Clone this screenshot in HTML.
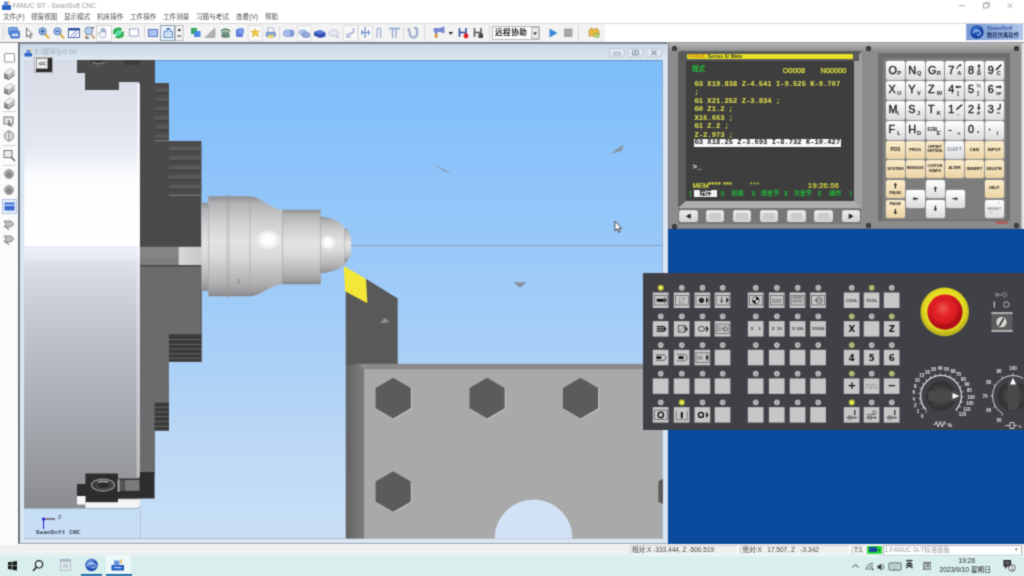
<!DOCTYPE html><html lang="zh"><head><meta charset="utf-8"><title>FANUC 0iT - SwanSoft CNC</title><style>
*{margin:0;padding:0;box-sizing:border-box}
html,body{width:1024px;height:576px;overflow:hidden;background:#fff}
body{position:relative;font-family:"Liberation Sans","Noto Sans CJK SC",sans-serif;font-size:8px;color:#555}
#wrap{position:absolute;left:0;top:0;width:1024px;height:576px;filter:url(#soft)}
.a{position:absolute}
.t{position:absolute;white-space:nowrap;line-height:1}
#titlebar{left:-10px;top:-10px;width:1044px;height:22px;background:#fff}
#menubar{left:-10px;top:12px;width:1044px;height:11px;background:#fff}
#toolbar{left:-10px;top:23px;width:1044px;height:20px;background:#fff;border-top:1px solid #d8d8d8}
#tbgrey{left:-10px;top:24px;width:615px;height:18px;background:#f3f3f3}
#leftbar{left:-10px;top:43px;width:29px;height:501px;background:#fbfbfb}
#mdi{left:18px;top:42px;width:650px;border-left:2px solid #6c7480 !important;height:501.500px;background:linear-gradient(#c9d6e6,#dfe8f2 18px,#dbe6f3 18px);border:1px solid #7a8492;border-right-color:#d0dbe8;border-bottom-color:#98a2ae}
#scene{left:24px;top:60px;width:638.500px;height:478.500px;overflow:hidden}
#right{left:667.500px;top:43px;width:366.500px;height:500.500px;background:#094a9d}
#status{left:-10px;top:543.500px;width:1044px;height:12.500px;background:#f0f0f0;border-top:1px solid #fafafa}
#taskbar{left:-10px;top:552.500px;width:1044px;height:33.500px;background:linear-gradient(rgba(216,239,237,0),#d8efed 4.500px)}

.mono{font-family:"Liberation Mono",monospace;font-weight:bold;font-size:7.150px}
.key{width:18.800px;height:19px;background:linear-gradient(#ffffff,#e9e9e9 60%,#dcdcdc);border-radius:2px;box-shadow:0 0 0 0.5px #9a9a9a}
.kl{width:18.800px;text-align:center;letter-spacing:0}
.key.bk{background:linear-gradient(#fbeccb,#f3dfb6 60%,#ead3a4)}
</style></head><body><svg width="0" height="0" style="position:absolute"><defs><filter id="soft" x="0" y="0" width="100%" height="100%" color-interpolation-filters="sRGB"><feConvolveMatrix order="3" kernelMatrix="1 3 1 3 12 3 1 3 1" divisor="28" edgeMode="duplicate" preserveAlpha="true"/></filter></defs></svg><div id="wrap">
<div class="a" id="titlebar"></div><div class="a" id="menubar"></div>
<div class="a" id="toolbar"></div><div class="a" id="tbgrey"></div>
<div class="a" style="left:-10px;top:42px;width:1044px;height:1px;background:#9a9a9a"></div>
<div class="a" id="leftbar"></div>
<div class="t" style="left:12.500px;top:2.600px;font-size:6.500px;color:#969696;letter-spacing:0.05px">FANUC 0iT - SwanSoft CNC</div>
<div class="t" style="left:3px;top:13.5px;font-size:6.6px;color:#505050">文件(F)</div>
<div class="t" style="left:31px;top:13.5px;font-size:6.6px;color:#505050">视窗视图</div>
<div class="t" style="left:64px;top:13.5px;font-size:6.6px;color:#505050">显示模式</div>
<div class="t" style="left:97px;top:13.5px;font-size:6.6px;color:#505050">机床操作</div>
<div class="t" style="left:130px;top:13.5px;font-size:6.6px;color:#505050">工件操作</div>
<div class="t" style="left:163px;top:13.5px;font-size:6.6px;color:#505050">工件测量</div>
<div class="t" style="left:196px;top:13.5px;font-size:6.6px;color:#505050">习题与考试</div>
<div class="t" style="left:236px;top:13.5px;font-size:6.6px;color:#505050">查看(V)</div>
<div class="t" style="left:265px;top:13.5px;font-size:6.6px;color:#505050">帮助</div>
<div class="a" style="left:492px;top:26px;width:48px;height:14px;background:#fff;border:1px solid #b8b8b8"></div>
<div class="t" style="left:495px;top:28.5px;font-size:7.6px;font-weight:bold;color:#222;letter-spacing:0.5px">远程协助</div>
<div class="a" style="left:531px;top:27px;width:8px;height:12px;background:#ececec;border:1px solid #bbb"></div>
<svg class="a" style="left:0;top:0" width="1024" height="112" viewBox="0 0 1024 112"><rect x="2" y="5" width="9" height="5" fill="#2a63c4"/><rect x="4" y="1.5" width="4" height="4" fill="#6a8fd8"/><rect x="8.5" y="1" width="1.2" height="3" fill="#e8b030"/><path d="M959 5.5h6" stroke="#999" stroke-width="0.8" fill="none"/><rect x="983.5" y="3.5" width="4.5" height="4.5" fill="none" stroke="#999" stroke-width="0.8"/><path d="M985 3.5v-1h4.5v4.5h-1" fill="none" stroke="#999" stroke-width="0.7"/><path d="M1007.5 3l5 5m0-5l-5 5" stroke="#999" stroke-width="0.8" fill="none"/><path d="M2.5 26v14M4.5 26v14" stroke="#c8c8c8" stroke-width="0.8" stroke-dasharray="1 1"/><rect x="8.5" y="27.5" width="9" height="7" rx="1" fill="#7da7e6" stroke="#3d6fc2" stroke-width="0.8"/><rect x="10.5" y="31" width="9" height="7" rx="1" fill="#5e90dc" stroke="#2f5fb5" stroke-width="0.8"/><rect x="12" y="34" width="6" height="2" fill="#dbe8fa"/><path d="M26.5 28v9l2-2 1.5 3 1.2-.6-1.4-2.8h2.6z" fill="#fff" stroke="#333" stroke-width="0.7"/><path d="M45 34l3.500 3.800" stroke="#d4b040" stroke-width="2" stroke-linecap="round"/><circle cx="42.5" cy="31.300" r="3.500" fill="#a6c6ec" stroke="#4a72b8" stroke-width="1"/><path d="M40.7 31.300h3.600" stroke="#234a9a" stroke-width="1.100"/><path d="M42.5 29.500v3.600" stroke="#234a9a" stroke-width="1.100"/><path d="M60 34l3.500 3.800" stroke="#d4b040" stroke-width="2" stroke-linecap="round"/><circle cx="57.5" cy="31.300" r="3.500" fill="#a6c6ec" stroke="#4a72b8" stroke-width="1"/><path d="M55.7 31.300h3.600" stroke="#234a9a" stroke-width="1.100"/><rect x="68.5" y="28.5" width="11" height="9" fill="#fff" stroke="#3a58a8" stroke-width="0.9"/><rect x="68.5" y="28.5" width="11" height="2" fill="#2a4aa0"/><path d="M71 36l5-5M74 36.5l4-4" stroke="#3a58a8" stroke-width="0.9"/><path d="M90.500 33l3.500 5M87.500 33.500l-2 4.500" stroke="#c4a468" stroke-width="1.800" stroke-linecap="round"/><circle cx="88.700" cy="30.800" r="3.900" fill="#b4d0ec" stroke="#6f8fb8" stroke-width="0.900"/><path d="M86 38h3" stroke="#2a4a6a" stroke-width="1.200"/><path d="M91.500 27.800h2.500" stroke="#333" stroke-width="1.100"/><rect x="96.5" y="25.5" width="15" height="16" fill="#fbfbfb" stroke="#c9c9c9" stroke-width="0.8"/><path d="M101 33v-3.2c0-.9 1.2-.9 1.2 0V32v-3.4c0-.9 1.2-.9 1.2 0V32v-3c0-.9 1.2-.9 1.2 0v3.4-2c0-.9 1.2-.9 1.2 0v4.1c0 2.2-1 3.5-3 3.5s-2.700-1-3.600-3l-.9-1.700c-.4-.8.600-1.300 1.100-.6z" fill="#f2f5fa" stroke="#8a9cbc" stroke-width="0.7"/><circle cx="118.500" cy="33" r="3.200" fill="#5ee0b0"/><circle cx="118.500" cy="33" r="4.200" fill="none" stroke="#2aa94a" stroke-width="2.300" stroke-dasharray="10.500 2.700" transform="rotate(-20 118.500 33)"/><path d="M112.800 31.500h4.500l-2.500-3.500zM124.200 34.500h-4.500l2.500 3.500z" fill="#2aa94a"/><rect x="129.5" y="29" width="9" height="7" fill="#fff" stroke="#4a5aa0" stroke-width="0.900" stroke-dasharray="1.500 1"/><path d="M144.5 26v14M279.5 26v14M424.5 25v16M489.500 25v16M578.500 25v16" stroke="#d0d0d0" stroke-width="0.8"/><rect x="148.5" y="29.5" width="9" height="7" fill="#a9c3ee" stroke="#4a6cc0" stroke-width="0.900"/><rect x="160.500" y="25.500" width="14" height="15" fill="#e9f1fb" stroke="#7a8aa0" stroke-width="0.800"/><path d="M164 37.500v-6h3v-3h3v3h2.500v6z" fill="#cfe0f6" stroke="#4a70b8" stroke-width="0.800"/><rect x="167" y="28" width="2" height="2" fill="#4a70b8"/><rect x="175.500" y="25.500" width="7.500" height="15" fill="#f4f4f4" stroke="#aaa" stroke-width="0.700"/><path d="M177.500 31h3.500l-1.750-2.800zM177.500 36.500h3.500v-1h-3.500z" fill="#222"/><rect x="191" y="28" width="6" height="6" fill="#3aa860"/><rect x="194" y="31" width="6.500" height="6" fill="#4a8ae0"/><path d="M205 37.500l10-9.500v9.500z" fill="#b0b0b0" stroke="#909090" stroke-width="0.500"/><path d="M221 31.500a5 4 0 0 1 9 0M222 33.500a4 3 0 0 1 7 0" fill="none" stroke="#3a6a4a" stroke-width="1.300"/><ellipse cx="225.500" cy="35.500" rx="4.500" ry="2.500" fill="#6a8a7a"/><rect x="236" y="29" width="7" height="8" rx="1.500" fill="#5a78d8"/><rect x="238" y="28" width="6" height="6" rx="1.500" fill="#7a98e8"/><rect x="248.200" y="25.500" width="14" height="15.500" fill="#f9f9f9" stroke="#d2d2d2" stroke-width="0.700"/><path d="M255 28.500l1.200 3 3.800-.8-2.800 2.600 1.600 3.400-3.300-1.800-3.400 2 1.300-3.500-3-2.300 3.600.2z" fill="#f0c838" stroke="#c8a020" stroke-width="0.400"/><rect x="266" y="32" width="9.500" height="4.500" rx="1" fill="#8aa8d8" stroke="#5a78b8" stroke-width="0.600"/><rect x="268" y="28" width="5.500" height="4" fill="#fff" stroke="#7a8aa8" stroke-width="0.600"/><rect x="268" y="35" width="5.500" height="3" fill="#e8d070"/><rect x="283.500" y="30" width="10.500" height="6.500" rx="3" fill="#a9bdea" stroke="#6f88c8" stroke-width="0.600"/><ellipse cx="292" cy="33.300" rx="2.300" ry="3.200" fill="#7f98d8"/><rect x="297.500" y="25.500" width="13.500" height="15.500" fill="#f8f8f8" stroke="#d6d6d6" stroke-width="0.700"/><rect x="299" y="30" width="8" height="5" rx="2.500" fill="#b4c6ec" stroke="#7088c8" stroke-width="0.500"/><rect x="302" y="32.500" width="8" height="5" rx="2.500" fill="#94a8dc" stroke="#6078b8" stroke-width="0.500"/><path d="M314 32l6-2 5.500 2.500v4l-5.500 1.500-6-2.500z" fill="#2f50b0"/><path d="M314 32l6-2 5.500 2.500-5.500 1.800z" fill="#5a7ad8"/><ellipse cx="333.500" cy="33" rx="5" ry="3.200" fill="#e4e8f0" stroke="#b0b8c8" stroke-width="0.700"/><path d="M336 35.500l3 2.500" stroke="#b0b8c8" stroke-width="1.200"/><rect x="343.500" y="25.500" width="14" height="15.500" fill="#f8f8f8" stroke="#d6d6d6" stroke-width="0.700"/><path d="M347 33.500v3.500h2.500v-3l4-2v-4" fill="none" stroke="#9aacd0" stroke-width="1.400"/><rect x="358.500" y="25.500" width="14" height="15.500" fill="#f8f8f8" stroke="#d6d6d6" stroke-width="0.700"/><path d="M365 27v11M362 30v5M368.500 30v5M361 32.500h9" fill="none" stroke="#6a8cc8" stroke-width="1.200"/><path d="M377 38v-8a1.800 1.800 0 0 1 3.600 0v8" fill="none" stroke="#9aacd0" stroke-width="1.200"/><path d="M389 28.500h11M392.500 29v9M396 29v9" fill="none" stroke="#8aa4d0" stroke-width="1.300"/><path d="M408.500 28l1.500 6a3.500 3.500 0 0 0 7 0v-5l-2.500-1.500" fill="none" stroke="#6a7fa8" stroke-width="2.200"/><path d="M408.500 28l1.500 6a3.500 3.500 0 0 0 7 0v-5l-2.500-1.500" fill="none" stroke="#dfe6f4" stroke-width="0.900"/><path d="M403.500 26v14" stroke="#d0d0d0" stroke-width="0.800"/><path d="M434 28.500h6l4-1.500v6l-4-1.500h-3v6h-1.500v-6h-1.500z" fill="#7a8ad8" stroke="#4a5ab0" stroke-width="0.500"/><rect x="434.500" y="34" width="3" height="3.500" fill="#e8a030"/><path d="M448.500 32h4.500l-2.250 2.800z" fill="#222"/><path d="M459.500 28v9M466 28v6M459.500 32.500h6.500" stroke="#2a4aa0" stroke-width="1.500" fill="none"/><circle cx="466" cy="36" r="2.400" fill="#e02020"/><path d="M474.500 28v9M481 28v6M474.500 32.500h6.500" stroke="#555" stroke-width="1.500" fill="none"/><rect x="478.500" y="33.500" width="4.500" height="4.500" fill="#444"/><path d="M533 32.500h4l-2 2.500z" fill="#222"/><path d="M549.500 28.500v9l8-4.500z" fill="#3a88d8"/><rect x="564.500" y="29" width="7.500" height="7.500" fill="#a8a8a8" stroke="#8a8a8a" stroke-width="0.600"/><path d="M589 36v-5l2-3 3 1.500 3-1.500 2 3v5z" fill="#e8b848" stroke="#b08828" stroke-width="0.600"/><rect x="595" y="33.500" width="4" height="4" fill="#b8d878" stroke="#7a9a40" stroke-width="0.500"/><rect x="966.200" y="23.800" width="57" height="16.400" fill="url(#lg1)"/><defs><linearGradient id="lg1" x1="0" x2="1"><stop offset="0" stop-color="#7599d2"/><stop offset="1" stop-color="#b2c7e9"/></linearGradient><radialGradient id="lgb" cx="0.4" cy="0.35"><stop offset="0" stop-color="#4a88e0"/><stop offset="1" stop-color="#123c9c"/></radialGradient></defs><circle cx="977" cy="32" r="6.700" fill="url(#lgb)"/><path d="M973 33c2-3 5-3 7-1s-1 4-3 3" fill="none" stroke="#fff" stroke-width="0.900"/><text x="987" y="30" font-family="Liberation Sans,sans-serif" font-size="5.600" font-weight="bold" font-style="italic" fill="#3a5aa8">SwanSoft</text><text x="987" y="36.600" font-family="Liberation Sans,Noto Sans CJK SC,sans-serif" font-size="5.350" font-weight="bold" fill="#1a2a5a">数控仿真软件</text><rect x="4.500" y="53.500" width="10" height="8.500" rx="0.500" fill="#fff" stroke="#8a8a8a" stroke-width="0.900"/><path d="M4 73l6-4.500 4.500 2v4.500l-6 4.500-4.500-2z" fill="#d8d8d8"/><path d="M4 73l4.500 2 6-4.500-4.500-2z" fill="#f0f0f0" stroke="#9a9a9a" stroke-width="0.500"/><path d="M4 73v4.500l4.500 2v-4.500z" fill="#8c8c8c"/><path d="M8.500 79.5l6-4.500v-4.500l-6 4.500z" fill="#bdbdbd"/><path d="M4 77.5l4.500 2 6-4.500" fill="none" stroke="#444" stroke-width="0.800"/><path d="M4 88l6-4.500 4.500 2v4.500l-6 4.500-4.500-2z" fill="#d8d8d8"/><path d="M4 88l4.500 2 6-4.500-4.500-2z" fill="#f0f0f0" stroke="#9a9a9a" stroke-width="0.500"/><path d="M4 88v4.500l4.500 2v-4.500z" fill="#8c8c8c"/><path d="M8.500 94.5l6-4.500v-4.500l-6 4.500z" fill="#bdbdbd"/><path d="M4 92.5l4.500 2 6-4.500" fill="none" stroke="#444" stroke-width="0.800"/><path d="M4 102.5l6-4.500 4.500 2v4.500l-6 4.500-4.500-2z" fill="#d8d8d8"/><path d="M4 102.5l4.500 2 6-4.500-4.500-2z" fill="#f0f0f0" stroke="#9a9a9a" stroke-width="0.500"/><path d="M4 102.5v4.500l4.500 2v-4.500z" fill="#8c8c8c"/><path d="M8.500 109.0l6-4.500v-4.500l-6 4.500z" fill="#bdbdbd"/><path d="M4 107.0l4.500 2 6-4.500" fill="none" stroke="#444" stroke-width="0.800"/></svg>
<svg class="a" style="left:0;top:110px" width="19" height="150" viewBox="0 110 19 150"><path d="M3 111.500h13M3 145.500h13M3 165.500h13" stroke="#c8c8c8" stroke-width="0.800"/><rect x="4" y="117" width="9" height="7" fill="#e4e4e4" stroke="#555" stroke-width="0.800"/><path d="M9 120v6l1.500-1.500 1.500 2.500" fill="none" stroke="#333" stroke-width="0.900"/><ellipse cx="9" cy="136" rx="4.500" ry="5" fill="#e0e0e0" stroke="#666" stroke-width="0.800"/><path d="M9 131v10" stroke="#666" stroke-width="0.700"/><rect x="4" y="150.500" width="8" height="7" fill="#eee" stroke="#555" stroke-width="0.800"/><path d="M11 157l4 4" stroke="#555" stroke-width="1.200"/><circle cx="9" cy="174" r="4.500" fill="#b8b8b8" stroke="#777" stroke-width="0.700"/><path d="M6 173l3-2 3 2v3l-3 2-3-2z" fill="#8a8a8a"/><circle cx="9" cy="190" r="4.500" fill="#b8b8b8" stroke="#777" stroke-width="0.700"/><path d="M6 189l3-2 3 2v3l-3 2-3-2z" fill="#8a8a8a"/><rect x="2.500" y="199.500" width="14" height="14" fill="#e6eefa" stroke="#9ab0d8" stroke-width="0.700"/><rect x="4.500" y="202.500" width="10" height="8" fill="#3a6ad0"/><rect x="4.500" y="204.500" width="10" height="1.300" fill="#cfe0ff"/><path d="M4 221h7l3 3-3 3h-7l2-3z" fill="#c0c0c0" stroke="#666" stroke-width="0.700"/><path d="M6 227l3 3" stroke="#555" stroke-width="1"/><path d="M4 236h7l3 3-3 3h-7l2-3z" fill="#c0c0c0" stroke="#666" stroke-width="0.700"/><path d="M6 242l3 3" stroke="#555" stroke-width="1"/></svg>
<div class="a" id="mdi"></div>
<div class="a" style="left:19px;top:43px;width:649px;height:1px;background:#7d8794"></div>
<div class="a" style="left:23.800px;top:59.500px;width:639.200px;height:479.500px;background:#9aa2ae"></div>
<div class="t" style="left:34.500px;top:48.500px;font-size:6.8px;color:#a4afbe">E:\程序\ju2.txt</div>
<svg class="a" style="left:24px;top:45px" width="12" height="14" viewBox="24 45 12 14"><rect x="24.500" y="53" width="7.500" height="3.500" fill="#2a63c4"/><rect x="26.500" y="50" width="3.500" height="3.500" fill="#5a85d6"/><rect x="30.500" y="49.500" width="1" height="2.500" fill="#e8b030"/></svg>
<svg class="a" style="left:606px;top:46px" width="60" height="14" viewBox="606 46 60 14"><g fill="#dde6f1" stroke="#b2bdcc" stroke-width="0.700"><rect x="609.500" y="48.500" width="15" height="8.500" rx="1"/><rect x="628" y="48.500" width="15" height="8.500" rx="1"/><rect x="646.500" y="48.500" width="15" height="8.500" rx="1"/></g><rect x="614" y="52.500" width="6" height="2.500" fill="none" stroke="#8a96a8" stroke-width="0.700"/><rect x="632.500" y="50.500" width="6" height="4.500" rx="1" fill="none" stroke="#6a7688" stroke-width="0.800"/><rect x="634.500" y="52" width="2" height="1.500" fill="#6a7688"/><path d="M651.500 50.500l5 4.500m0-4.500l-5 4.500" stroke="#8a96a8" stroke-width="1.300"/></svg>
<svg class="a" id="scene" style="left:24px;top:60px" width="639" height="479" viewBox="24 60 639 479"><defs><linearGradient id="sky" x1="0" y1="0" x2="0" y2="1"><stop offset="0" stop-color="#7cbdfa"/><stop offset="0.25" stop-color="#8fc4fa"/><stop offset="0.63" stop-color="#aad0f7"/><stop offset="0.82" stop-color="#bed9f5"/><stop offset="1" stop-color="#c9dff6"/></linearGradient><linearGradient id="chk" x1="0" y1="0" x2="0" y2="1"><stop offset="0" stop-color="#d8dce7"/><stop offset="0.10" stop-color="#dde1eb"/><stop offset="0.19" stop-color="#e4e8f0"/><stop offset="0.225" stop-color="#eef1f6"/><stop offset="0.26" stop-color="#fbfcfd"/><stop offset="0.414" stop-color="#ffffff"/><stop offset="0.4155" stop-color="#eceff8"/><stop offset="0.445" stop-color="#e7eaf3"/><stop offset="0.449" stop-color="#dde1ea"/><stop offset="0.49" stop-color="#d3d7df"/><stop offset="0.60" stop-color="#c1c4cc"/><stop offset="0.713" stop-color="#b2b5bd"/><stop offset="0.824" stop-color="#a3a6ac"/><stop offset="0.935" stop-color="#94969a"/><stop offset="1" stop-color="#8a8c8f"/></linearGradient><linearGradient id="wp" x1="0" y1="0" x2="0" y2="1"><stop offset="0" stop-color="#8e8e90"/><stop offset="0.07" stop-color="#b2b2b4"/><stop offset="0.25" stop-color="#cfcfd0"/><stop offset="0.45" stop-color="#e3e3e3"/><stop offset="0.6" stop-color="#dadada"/><stop offset="0.85" stop-color="#b4b4b5"/><stop offset="0.95" stop-color="#9c9c9e"/><stop offset="1" stop-color="#868688"/></linearGradient><linearGradient id="band" x1="0" y1="0" x2="1" y2="0"><stop offset="0" stop-color="#d8d8d8"/><stop offset="1" stop-color="#c8c8c8"/></linearGradient><radialGradient id="hl"><stop offset="0" stop-color="#fff"/><stop offset="0.45" stop-color="#fff" stop-opacity="0.9"/><stop offset="1" stop-color="#fff" stop-opacity="0"/></radialGradient><linearGradient id="tl" x1="0" y1="0" x2="1" y2="0"><stop offset="0" stop-color="#626262"/><stop offset="1" stop-color="#7e7e7e"/></linearGradient></defs><rect x="24" y="60" width="639" height="479" fill="url(#sky)"/><rect x="24" y="59.500" width="639" height="1.200" fill="#5e7fae"/><path d="M140.500 509v30" stroke="#aebfd4" stroke-width="0.800"/><path d="M24 60H120V82H137.500q2.500 0 2.500 2.500V506q0 3-3 3H24z" fill="url(#chk)"/><rect x="137" y="84" width="3" height="160" fill="#fff" opacity="0.550"/><rect x="136.500" y="246" width="3.500" height="255" fill="#fff" opacity="0.350"/><path d="M77 60H155V83H169V141H201.500V247.500H140V84q0-2-2.500-2H119V90H85V73H77z" fill="#4a4a4a"/><ellipse cx="98" cy="61" rx="9" ry="5.500" fill="#3a3a3a" stroke="#6e6e6e" stroke-width="0.800"/><path d="M92 62q6 4 13 0" stroke="#a8a8a8" stroke-width="1" fill="none"/><rect x="124" y="60" width="16" height="5" fill="#3c3c3c"/><rect x="169" y="146.5" width="32.500" height="4.500" fill="#585858"/><rect x="169" y="151.0" width="32.500" height="1" fill="#3e3e3e"/><rect x="169" y="156.0" width="32.500" height="4.500" fill="#585858"/><rect x="169" y="160.5" width="32.500" height="1" fill="#3e3e3e"/><rect x="169" y="165.5" width="32.500" height="4.500" fill="#585858"/><rect x="169" y="170.0" width="32.500" height="1" fill="#3e3e3e"/><rect x="169" y="175.0" width="32.500" height="4.500" fill="#585858"/><rect x="169" y="179.5" width="32.500" height="1" fill="#3e3e3e"/><rect x="169" y="184.5" width="32.500" height="4.500" fill="#585858"/><rect x="169" y="189.0" width="32.500" height="1" fill="#3e3e3e"/><rect x="155" y="88.0" width="14" height="4.200" fill="#575757"/><rect x="155" y="92.2" width="14" height="1" fill="#3e3e3e"/><rect x="155" y="97.3" width="14" height="4.200" fill="#575757"/><rect x="155" y="101.5" width="14" height="1" fill="#3e3e3e"/><rect x="155" y="106.6" width="14" height="4.200" fill="#575757"/><rect x="155" y="110.8" width="14" height="1" fill="#3e3e3e"/><rect x="155" y="115.9" width="14" height="4.200" fill="#575757"/><rect x="155" y="120.1" width="14" height="1" fill="#3e3e3e"/><rect x="155" y="125.2" width="14" height="4.200" fill="#575757"/><rect x="155" y="129.4" width="14" height="1" fill="#3e3e3e"/><rect x="155" y="134.5" width="14" height="4.200" fill="#575757"/><rect x="155" y="138.7" width="14" height="1" fill="#3e3e3e"/><path d="M155 140.800h14M169 195.300h32" stroke="#a4a4a4" stroke-width="0.700"/><rect x="140" y="247" width="39" height="19" fill="#848484"/><rect x="140" y="258" width="39" height="8" fill="#7e7e7e"/><rect x="178.800" y="247" width="23.200" height="19" fill="url(#band)"/><path d="M140 265.500H201.500V362H169V431H155V474H140z" fill="#6b6b6b"/><rect x="140" y="265.200" width="61.500" height="1.600" fill="#4c4c4c"/><rect x="200.500" y="266" width="1.200" height="96" fill="#585858"/><rect x="169" y="334.600" width="32.500" height="27.400" fill="#393939"/><rect x="154.600" y="403" width="14.400" height="28" fill="#393939"/><rect x="169" y="339.4" width="32.500" height="0.900" fill="#6c6c6c"/><rect x="169" y="344.2" width="32.500" height="0.900" fill="#6c6c6c"/><rect x="169" y="348.8" width="32.500" height="0.900" fill="#6c6c6c"/><rect x="169" y="353.6" width="32.500" height="0.900" fill="#6c6c6c"/><rect x="169" y="358.1" width="32.500" height="0.900" fill="#6c6c6c"/><rect x="154.600" y="407.1" width="14.400" height="0.900" fill="#6c6c6c"/><rect x="154.600" y="411.9" width="14.400" height="0.900" fill="#6c6c6c"/><rect x="154.600" y="416.5" width="14.400" height="0.900" fill="#6c6c6c"/><rect x="154.600" y="421.6" width="14.400" height="0.900" fill="#6c6c6c"/><rect x="154.600" y="426.3" width="14.400" height="0.900" fill="#6c6c6c"/><path d="M77 484.500H85.400V474H118V479H140V472.500H154.600V499H118V502.700H85.400V496.500H77z" fill="#2d2d2d"/><path d="M140 475.500q0 3.500-3.500 3.500H140z" fill="#2d2d2d"/><rect x="77" y="496.500" width="8.400" height="8.500" fill="#f6f6f8"/><path d="M85.400 502.700H118V499.800H140V505q0 3.500-3.500 3.500H85.400z" fill="#f4f4f6"/><ellipse cx="103" cy="485.500" rx="11.500" ry="6" fill="#3a3a3a" stroke="#9a9a9a" stroke-width="1.200"/><ellipse cx="103.500" cy="486" rx="7" ry="3.200" fill="#2a2a2a" stroke="#666" stroke-width="0.800"/><path d="M98 482.300q5-1.500 10 0" stroke="#ddd" stroke-width="0.900" fill="none"/><rect x="117.600" y="479.800" width="2.200" height="12.500" fill="#a8a8a8"/><rect x="119.800" y="480.300" width="5" height="11" fill="#555"/><rect x="125" y="480.300" width="14.500" height="11" fill="#7a7a7a"/><path d="M201.500 203H209V291H201.500z" fill="url(#wp)"/><path d="M208.500 196.500H250.500V296.500H208.500z" fill="url(#wp)"/><path d="M250 196.500C264 197.500 268 209 283 210V284.500C268 285.500 264 295.500 250 296.500z" fill="url(#wp)"/><path d="M282.500 210H321V284.500H282.500z" fill="url(#wp)"/><path d="M320.500 217C333 217.500 342 223 345.500 228.700V263.500C342 268 333 273 320.500 273.500z" fill="url(#wp)"/><path d="M345 228.700Q351.500 229.500 351.500 245.500Q351.500 261.500 345 263z" fill="url(#wp)"/><path d="M208.700 197v99M227.300 196.500v100M229.300 196.500v100M250 197v99M282.800 210.500v74M320.700 211v73M345 229v34" stroke="#9a9a9a" stroke-width="0.700" fill="none" opacity="0.700"/><path d="M227.300 194.500v2M229.300 194.500v2M227.300 296.500v2M229.300 296.500v2" stroke="#9a9a9a" stroke-width="0.700"/><ellipse cx="268.500" cy="240" rx="13" ry="11" fill="url(#hl)"/><ellipse cx="328.500" cy="242.500" rx="8" ry="8" fill="url(#hl)"/><text x="237.500" y="283.500" font-family="Liberation Serif,serif" font-size="5.500" fill="#555">1</text><path d="M351 245.700H663" stroke="#8797ac" stroke-width="0.800"/><path d="M346 290L366.500 279.300 398 298.700V366H346z" fill="#595959"/><path d="M344 266.300L366.200 279.300 367.700 303.500 345.400 291.400z" fill="#f3e838"/><path d="M380 323.500l5-5.500 5 4.500z" fill="#909090"/><path d="M346 366l13-2 6 5.500V539H346z" fill="url(#tl)"/><path d="M364.500 369H663V539H364.500z" fill="#a9a9a9"/><path d="M359 364H663V369.500H365z" fill="#8a8a8a"/><polygon points="394.3,378.8 376.5,389.1 376.5,409.6 394.3,419.8 412.1,409.6 412.1,389.1" fill="#c4c4c4"/><polygon points="393.5,378.2 375.9,388.4 375.9,408.6 393.5,418.8 411.1,408.7 411.1,388.4" fill="#5b5b5b"/><polygon points="488.3,378.8 470.5,389.1 470.5,409.6 488.3,419.8 506.1,409.6 506.1,389.1" fill="#c4c4c4"/><polygon points="487.5,378.2 469.9,388.4 469.9,408.6 487.5,418.8 505.1,408.7 505.1,388.4" fill="#5b5b5b"/><polygon points="581.8,378.8 564.0,389.1 564.0,409.6 581.8,419.8 599.6,409.6 599.6,389.1" fill="#c4c4c4"/><polygon points="581.0,378.2 563.4,388.4 563.4,408.6 581.0,418.8 598.6,408.7 598.6,388.4" fill="#5b5b5b"/><polygon points="394.3,472.3 376.5,482.6 376.5,503.1 394.3,513.3 412.1,503.1 412.1,482.6" fill="#c4c4c4"/><polygon points="393.5,471.7 375.9,481.9 375.9,502.1 393.5,512.3 411.1,502.2 411.1,481.9" fill="#5b5b5b"/><polygon points="677.3,472.3 659.5,482.6 659.5,503.1 677.3,513.3 695.1,503.1 695.1,482.6" fill="#c4c4c4"/><polygon points="676.5,471.7 658.9,481.9 658.9,502.1 676.5,512.3 694.1,502.2 694.1,481.9" fill="#5b5b5b"/><path d="M495 539a39 39 0 0 1 78 0z" fill="#d2e2f6"/><path d="M433.300 164l17.700 9.200-5.500-1z" fill="#8a94a2"/><path d="M611.400 153.500l12.500-9-1.500 6.500z" fill="#8a94a2"/><path d="M513.500 282.500h13.500l-6.500 5.500z" fill="#87909c"/><path d="M43.500 519.500v10" stroke="#1a1ad8" stroke-width="1"/><path d="M43.500 519.500h11.500" stroke="#3a1a1a" stroke-width="1"/><circle cx="43.500" cy="519.500" r="1.600" fill="#1a1ad8"/><text x="58" y="519.800" font-family="Liberation Mono,monospace" font-size="6" font-weight="bold" fill="#667">Z</text><text x="35.700" y="534.500" font-family="Liberation Mono,monospace" font-size="6.200" font-weight="bold" fill="#3a3f4c">SwanSoft CNC</text><path d="M615.500 221.500v9.500l2.200-2 1.600 3.600 1.500-.7-1.600-3.500h3z" fill="#fff" stroke="#222" stroke-width="0.800"/></svg><div class="a" style="left:34px;top:57px;width:19px;height:16px;background:#e9e9e9;border:1px solid #b0b0b0"></div><div class="a" style="left:47px;top:58px;width:5px;height:14px;background:#2c2c2c"></div><div class="a" style="left:36px;top:68px;width:16px;height:4px;background:#2c2c2c"></div><div class="a" style="left:36px;top:58px;width:12px;height:11px;background:#f2f2f2;border:1px solid #9a9a9a"></div><div class="t" style="left:38.500px;top:59.500px;font-size:7px;font-weight:bold;color:#444;letter-spacing:-0.5px">&lt;&lt;</div>
<div class="a" id="right"></div>
<div class="a" style="left:667.500px;top:42.500px;width:354.700px;height:186.800px;background:#8c8c8c;border:1px solid #b4b4b4;border-left-color:#7c7c7c;border-bottom-color:#777"></div>
<div class="a" style="left:668.500px;top:43.500px;width:352px;height:7px;background:linear-gradient(#b0b0b0,#8e8e8e)"></div>
<div class="a" style="left:678px;top:51px;width:183.500px;height:156.500px;border-style:solid;border-width:10px 8px 7px 8.500px;border-color:#5a5a5a #9e9e9e #adadad #5e5e5e;border-radius:3px;background:#3e3e3e"></div>
<div class="a" style="left:680px;top:52px;width:179px;height:8.500px;background:#5a5a5a"></div>
<div class="a" style="left:687px;top:53.500px;width:166px;height:5.500px;background:#e8e428;border-radius:1px"></div>
<div class="t" style="left:688.500px;top:54.800px;font-size:4.800px;font-weight:bold;color:#c86a10;letter-spacing:0.2px">FANUC <span style="color:#333">Series 0<i>i</i> Mate</span></div>
<div class="a" style="left:686px;top:61px;width:167.500px;height:139px;background:#3e3e3e;border-radius:3px"></div>
<div class="t" style="left:692px;top:66px;font-size:6.600px;color:#22c03a;font-weight:bold">程式</div>
<div class="t" style="left:782.800px;top:66.500px;font-size:7.400px;color:#e4e444;-webkit-text-stroke:0.250px #e4e444">O0008</div>
<div class="t" style="left:820.600px;top:66.500px;font-size:7.400px;color:#e4e444;-webkit-text-stroke:0.250px #e4e444">N00000</div>
<div class="t mono" style="left:694.500px;top:80.7px;color:#e6e64e">G3 X19.838 Z-4.541 I-9.525 K-9.707</div>
<div class="t mono" style="left:694.500px;top:89.2px;color:#e6e64e">;</div>
<div class="t mono" style="left:694.500px;top:97.8px;color:#e6e64e">G1 X21.252 Z-3.834 ;</div>
<div class="t mono" style="left:694.500px;top:106.3px;color:#e6e64e">G0 Z1.2 ;</div>
<div class="t mono" style="left:694.500px;top:114.9px;color:#e6e64e">X16.663 ;</div>
<div class="t mono" style="left:694.500px;top:123.4px;color:#e6e64e">G1 Z.2 ;</div>
<div class="t mono" style="left:694.500px;top:132.0px;color:#e6e64e">Z-2.973 ;</div>
<div class="a" style="left:694px;top:138.800px;width:146.500px;height:8px;background:#fafafa"></div>
<div class="t mono" style="left:694.500px;top:139.200px;color:#111">G3 X18.25 Z-3.693 I-8.732 K-10.427</div>
<div class="t mono" style="left:692.500px;top:162.800px;color:#e8e8e8;font-size:8px">&gt;_</div>
<div class="t" style="left:692.500px;top:181.500px;font-size:7px;color:#e0e044;-webkit-text-stroke:0.200px #e0e044">MEM<span style="letter-spacing:0.3px;position:relative;top:-0.800px">**** ***</span></div>
<div class="t" style="left:750px;top:180.700px;font-size:7px;color:#dcdc40;letter-spacing:0.5px">***</div>
<div class="t" style="left:808px;top:181.500px;font-size:7.200px;color:#e0e044;letter-spacing:0.4px;-webkit-text-stroke:0.200px #e0e044">19:26:56</div>
<div class="a" style="left:693.700px;top:189.800px;width:23.300px;height:7.200px;background:#f4f4f4"></div>
<div class="t" style="left:689.5px;top:190.300px;font-size:6.100px;font-weight:bold;color:#20b838">[</div>
<div class="t" style="left:699.5px;top:190.300px;font-size:6.100px;font-weight:bold;color:#111">程序</div>
<div class="t" style="left:720.5px;top:190.300px;font-size:6.100px;font-weight:bold;color:#20b838">][</div>
<div class="t" style="left:731.5px;top:190.300px;font-size:6.100px;font-weight:bold;color:#20b838">检视</div>
<div class="t" style="left:751.5px;top:190.300px;font-size:6.100px;font-weight:bold;color:#20b838">][</div>
<div class="t" style="left:761px;top:190.300px;font-size:6.100px;font-weight:bold;color:#20b838">现单节</div>
<div class="t" style="left:784px;top:190.300px;font-size:6.100px;font-weight:bold;color:#20b838">][</div>
<div class="t" style="left:793.7px;top:190.300px;font-size:6.100px;font-weight:bold;color:#20b838">次单节</div>
<div class="t" style="left:817.5px;top:190.300px;font-size:6.100px;font-weight:bold;color:#20b838">][</div>
<div class="t" style="left:829.2px;top:190.300px;font-size:6.100px;font-weight:bold;color:#20b838">操作</div>
<div class="t" style="left:849.5px;top:190.300px;font-size:6.100px;font-weight:bold;color:#20b838">]</div>
<div class="a" style="left:678px;top:208px;width:183px;height:15.500px;background:#777;border-radius:1px"></div>
<div class="a" style="left:679px;top:209.800px;width:18.500px;height:12.500px;background:linear-gradient(#ececec,#d2d2d2);border-radius:2px;border:1px solid #d8d8d8"></div>
<div class="a" style="left:705.7px;top:209.800px;width:18.500px;height:12.500px;background:linear-gradient(#ececec,#d2d2d2);border-radius:2px;border:1px solid #d8d8d8"></div>
<div class="a" style="left:709.2px;top:212.500px;width:11.500px;height:7.500px;background:#cbcbcb;border-radius:1px"></div>
<div class="a" style="left:732.7px;top:209.800px;width:18.500px;height:12.500px;background:linear-gradient(#ececec,#d2d2d2);border-radius:2px;border:1px solid #d8d8d8"></div>
<div class="a" style="left:736.2px;top:212.500px;width:11.500px;height:7.500px;background:#cbcbcb;border-radius:1px"></div>
<div class="a" style="left:759.9px;top:209.800px;width:18.500px;height:12.500px;background:linear-gradient(#ececec,#d2d2d2);border-radius:2px;border:1px solid #d8d8d8"></div>
<div class="a" style="left:763.4px;top:212.500px;width:11.500px;height:7.500px;background:#cbcbcb;border-radius:1px"></div>
<div class="a" style="left:787px;top:209.800px;width:18.500px;height:12.500px;background:linear-gradient(#ececec,#d2d2d2);border-radius:2px;border:1px solid #d8d8d8"></div>
<div class="a" style="left:790.5px;top:212.500px;width:11.500px;height:7.500px;background:#cbcbcb;border-radius:1px"></div>
<div class="a" style="left:814.3px;top:209.800px;width:18.500px;height:12.500px;background:linear-gradient(#ececec,#d2d2d2);border-radius:2px;border:1px solid #d8d8d8"></div>
<div class="a" style="left:817.8px;top:212.500px;width:11.500px;height:7.500px;background:#cbcbcb;border-radius:1px"></div>
<div class="a" style="left:841.5px;top:209.800px;width:18.500px;height:12.500px;background:linear-gradient(#ececec,#d2d2d2);border-radius:2px;border:1px solid #d8d8d8"></div>
<div class="t" style="left:685.500px;top:213px;font-size:6px;color:#222">&#9664;</div><div class="t" style="left:848px;top:213px;font-size:6px;color:#222">&#9654;</div>
<div class="a" style="left:671.5px;top:45.5px;width:5px;height:5px;border-radius:50%;background:radial-gradient(#555,#1e1e1e 70%)"></div>
<div class="a" style="left:1022.200px;top:43px;width:12.500px;height:186.300px;background:#e6e6e6"></div>
<div class="a" style="left:878px;top:52.500px;width:131.500px;height:168px;background:#6d6d6d;border-radius:3px"></div>
<div class="a" style="left:866.2px;top:45.5px;width:5px;height:5px;border-radius:50%;background:radial-gradient(#555,#1e1e1e 70%)"></div>
<div class="a" style="left:1022.200px;top:43px;width:12.500px;height:186.300px;background:#e6e6e6"></div>
<div class="a" style="left:878px;top:52.500px;width:131.500px;height:168px;background:#6d6d6d;border-radius:3px"></div>
<div class="a" style="left:671.5px;top:223.5px;width:5px;height:5px;border-radius:50%;background:radial-gradient(#555,#1e1e1e 70%)"></div>
<div class="a" style="left:1022.200px;top:43px;width:12.500px;height:186.300px;background:#e6e6e6"></div>
<div class="a" style="left:878px;top:52.500px;width:131.500px;height:168px;background:#6d6d6d;border-radius:3px"></div>
<div class="a" style="left:866.0px;top:223.0px;width:5px;height:5px;border-radius:50%;background:radial-gradient(#555,#1e1e1e 70%)"></div>
<div class="a" style="left:1022.200px;top:43px;width:12.500px;height:186.300px;background:#e6e6e6"></div>
<div class="a" style="left:878px;top:52.500px;width:131.500px;height:168px;background:#6d6d6d;border-radius:3px"></div>
<div class="a" style="left:1013.8px;top:45.8px;width:5px;height:5px;border-radius:50%;background:radial-gradient(#555,#1e1e1e 70%)"></div>
<div class="a" style="left:1022.200px;top:43px;width:12.500px;height:186.300px;background:#e6e6e6"></div>
<div class="a" style="left:878px;top:52.500px;width:131.500px;height:168px;background:#6d6d6d;border-radius:3px"></div>
<div class="a" style="left:1013.8px;top:223.0px;width:5px;height:5px;border-radius:50%;background:radial-gradient(#555,#1e1e1e 70%)"></div>
<div class="a" style="left:1022.200px;top:43px;width:12.500px;height:186.300px;background:#e6e6e6"></div>
<div class="a" style="left:878px;top:52.500px;width:131.500px;height:168px;background:#6d6d6d;border-radius:3px"></div>
<div class="a" style="left:883px;top:58px;width:123px;height:161.500px;background:#7d7d7d;border-radius:2px"></div>
<div class="a key" style="left:886.0px;top:61.0px"></div>
<div class="t" style="left:888.5px;top:64.5px;font-size:10.800px;color:#1a1a1a;-webkit-text-stroke:0.350px #1a1a1a">O</div>
<div class="t" style="left:897.3px;top:71.2px;font-size:5.6px;font-weight:bold;color:#222">P</div>
<div class="a key" style="left:905.8px;top:61.0px"></div>
<div class="t" style="left:908.2px;top:64.5px;font-size:10.800px;color:#1a1a1a;-webkit-text-stroke:0.350px #1a1a1a">N</div>
<div class="t" style="left:917.0px;top:71.2px;font-size:5.6px;font-weight:bold;color:#222">Q</div>
<div class="a key" style="left:925.5px;top:61.0px"></div>
<div class="t" style="left:928.0px;top:64.5px;font-size:10.800px;color:#1a1a1a;-webkit-text-stroke:0.350px #1a1a1a">G</div>
<div class="t" style="left:936.8px;top:71.2px;font-size:5.6px;font-weight:bold;color:#222">R</div>
<div class="a key" style="left:945.2px;top:61.0px"></div>
<div class="t" style="left:948.2px;top:64.5px;font-size:10.800px;color:#1a1a1a;-webkit-text-stroke:0.350px #1a1a1a">7</div>
<div class="t" style="left:957.2px;top:71.2px;font-size:5.6px;font-weight:bold;color:#222">A</div>
<div class="a key" style="left:965.0px;top:61.0px"></div>
<div class="t" style="left:968.0px;top:64.5px;font-size:10.800px;color:#1a1a1a;-webkit-text-stroke:0.350px #1a1a1a">8</div>
<div class="t" style="left:977.0px;top:71.2px;font-size:5.6px;font-weight:bold;color:#222">B</div>
<div class="a key" style="left:984.8px;top:61.0px"></div>
<div class="t" style="left:987.8px;top:64.5px;font-size:10.800px;color:#1a1a1a;-webkit-text-stroke:0.350px #1a1a1a">9</div>
<div class="t" style="left:996.8px;top:71.2px;font-size:5.6px;font-weight:bold;color:#222">C</div>
<div class="a key" style="left:886.0px;top:80.9px"></div>
<div class="t" style="left:888.5px;top:84.4px;font-size:10.800px;color:#1a1a1a;-webkit-text-stroke:0.350px #1a1a1a">X</div>
<div class="t" style="left:897.3px;top:91.1px;font-size:5.6px;font-weight:bold;color:#222">U</div>
<div class="a key" style="left:905.8px;top:80.9px"></div>
<div class="t" style="left:908.2px;top:84.4px;font-size:10.800px;color:#1a1a1a;-webkit-text-stroke:0.350px #1a1a1a">Y</div>
<div class="t" style="left:917.0px;top:91.1px;font-size:5.6px;font-weight:bold;color:#222">V</div>
<div class="a key" style="left:925.5px;top:80.9px"></div>
<div class="t" style="left:928.0px;top:84.4px;font-size:10.800px;color:#1a1a1a;-webkit-text-stroke:0.350px #1a1a1a">Z</div>
<div class="t" style="left:936.8px;top:91.1px;font-size:5.6px;font-weight:bold;color:#222">W</div>
<div class="a key" style="left:945.2px;top:80.9px"></div>
<div class="t" style="left:948.2px;top:84.4px;font-size:10.800px;color:#1a1a1a;-webkit-text-stroke:0.350px #1a1a1a">4</div>
<div class="t" style="left:957.2px;top:91.1px;font-size:5.6px;font-weight:bold;color:#222">[</div>
<div class="a key" style="left:965.0px;top:80.9px"></div>
<div class="t" style="left:968.0px;top:84.4px;font-size:10.800px;color:#1a1a1a;-webkit-text-stroke:0.350px #1a1a1a">5</div>
<div class="t" style="left:977.0px;top:91.1px;font-size:5.6px;font-weight:bold;color:#222">]</div>
<div class="a key" style="left:984.8px;top:80.9px"></div>
<div class="t" style="left:987.8px;top:84.4px;font-size:10.800px;color:#1a1a1a;-webkit-text-stroke:0.350px #1a1a1a">6</div>
<div class="t" style="left:996.0px;top:92.2px;font-size:4.2px;font-weight:bold;color:#222">SP</div>
<div class="a key" style="left:886.0px;top:100.8px"></div>
<div class="t" style="left:888.5px;top:104.3px;font-size:10.800px;color:#1a1a1a;-webkit-text-stroke:0.350px #1a1a1a">M</div>
<div class="t" style="left:897.3px;top:111.0px;font-size:5.6px;font-weight:bold;color:#222">I</div>
<div class="a key" style="left:905.8px;top:100.8px"></div>
<div class="t" style="left:908.2px;top:104.3px;font-size:10.800px;color:#1a1a1a;-webkit-text-stroke:0.350px #1a1a1a">S</div>
<div class="t" style="left:917.0px;top:111.0px;font-size:5.6px;font-weight:bold;color:#222">J</div>
<div class="a key" style="left:925.5px;top:100.8px"></div>
<div class="t" style="left:928.0px;top:104.3px;font-size:10.800px;color:#1a1a1a;-webkit-text-stroke:0.350px #1a1a1a">T</div>
<div class="t" style="left:936.8px;top:111.0px;font-size:5.6px;font-weight:bold;color:#222">K</div>
<div class="a key" style="left:945.2px;top:100.8px"></div>
<div class="t" style="left:948.2px;top:104.3px;font-size:10.800px;color:#1a1a1a;-webkit-text-stroke:0.350px #1a1a1a">1</div>
<div class="t" style="left:957.2px;top:111.0px;font-size:5.6px;font-weight:bold;color:#222">,</div>
<div class="a key" style="left:965.0px;top:100.8px"></div>
<div class="t" style="left:968.0px;top:104.3px;font-size:10.800px;color:#1a1a1a;-webkit-text-stroke:0.350px #1a1a1a">2</div>
<div class="t" style="left:977.0px;top:111.0px;font-size:5.6px;font-weight:bold;color:#222">#</div>
<div class="a key" style="left:984.8px;top:100.8px"></div>
<div class="t" style="left:987.8px;top:104.3px;font-size:10.800px;color:#1a1a1a;-webkit-text-stroke:0.350px #1a1a1a">3</div>
<div class="t" style="left:996.8px;top:111.0px;font-size:5.6px;font-weight:bold;color:#222">=</div>
<div class="a key" style="left:886.0px;top:120.7px"></div>
<div class="t" style="left:888.5px;top:124.2px;font-size:10.800px;color:#1a1a1a;-webkit-text-stroke:0.350px #1a1a1a">F</div>
<div class="t" style="left:897.3px;top:130.9px;font-size:5.6px;font-weight:bold;color:#222">L</div>
<div class="a key" style="left:905.8px;top:120.7px"></div>
<div class="t" style="left:908.2px;top:124.2px;font-size:10.800px;color:#1a1a1a;-webkit-text-stroke:0.350px #1a1a1a">H</div>
<div class="t" style="left:917.0px;top:130.9px;font-size:5.6px;font-weight:bold;color:#222">D</div>
<div class="a key" style="left:925.5px;top:120.7px"></div>
<div class="t" style="left:927.5px;top:128.2px;font-size:4.500px;font-weight:bold;color:#222">EOB</div>
<div class="t" style="left:936.8px;top:130.9px;font-size:5.6px;font-weight:bold;color:#222">E</div>
<div class="a key" style="left:945.2px;top:120.7px"></div>
<div class="t" style="left:948.2px;top:124.2px;font-size:10.800px;color:#1a1a1a;-webkit-text-stroke:0.350px #1a1a1a">-</div>
<div class="t" style="left:957.2px;top:130.9px;font-size:5.6px;font-weight:bold;color:#222">+</div>
<div class="a key" style="left:965.0px;top:120.7px"></div>
<div class="t" style="left:968.0px;top:124.2px;font-size:10.800px;color:#1a1a1a;-webkit-text-stroke:0.350px #1a1a1a">0</div>
<div class="t" style="left:977.0px;top:130.9px;font-size:5.6px;font-weight:bold;color:#222">*</div>
<div class="a key" style="left:984.8px;top:120.7px"></div>
<div class="t" style="left:987.8px;top:124.2px;font-size:10.800px;color:#1a1a1a;-webkit-text-stroke:0.350px #1a1a1a">·</div>
<div class="t" style="left:996.8px;top:130.9px;font-size:5.6px;font-weight:bold;color:#222">/</div>
<svg class="a" style="left:940px;top:58px" width="70" height="66" viewBox="940 58 70 66"><path d="M956.8 69.0q0.300-3.500 4-3.800" fill="none" stroke="#1a1a1a" stroke-width="1"/><path d="M959.5 63.7l2.200 1.300-2.200 1.500z" fill="#1a1a1a"/><path d="M979.0 65.0v6" stroke="#1a1a1a" stroke-width="1.100"/><path d="M977.3 66.5l1.700-2.500 1.700 2.500z" fill="#1a1a1a"/><path d="M996.5 69.5l4.400-4.500" stroke="#1a1a1a" stroke-width="1.500" stroke-linecap="round"/><path d="M956.2 86.9h5" stroke="#1a1a1a" stroke-width="1.400"/><path d="M955.2 86.9l2.200-1.600v3.200z" fill="#1a1a1a"/><path d="M977.0 87.4l3.500-3.500" stroke="#333" stroke-width="0.600"/><circle cx="977.5" cy="84.7" r="0.700" fill="none" stroke="#333" stroke-width="0.500"/><circle cx="980.0" cy="86.7" r="0.700" fill="none" stroke="#333" stroke-width="0.500"/><path d="M995.8 86.9h5" stroke="#1a1a1a" stroke-width="1.400"/><path d="M1001.8 86.9l-2.200-1.600v3.200z" fill="#1a1a1a"/><path d="M956.8 109.3l4.800-4.300" stroke="#1a1a1a" stroke-width="1.500" stroke-linecap="round"/><path d="M978.8 103.8v5" stroke="#1a1a1a" stroke-width="1.200"/><path d="M977.0 107.6l1.800 2.600 1.800-2.600z" fill="#1a1a1a"/><path d="M1000.2 103.8v3.500q0 2-3 2" fill="none" stroke="#1a1a1a" stroke-width="1.200"/></svg>
<div class="a key bk" style="left:886.0px;top:140.6px;height:18px"></div>
<div class="t kl" style="left:886.0px;top:147.5px;font-size:4.7px;color:#151515;font-weight:bold">POS</div>
<div class="a key bk" style="left:905.8px;top:140.6px;height:18px"></div>
<div class="t kl" style="left:905.8px;top:147.5px;font-size:4.1px;color:#151515;font-weight:bold">PROG</div>
<div class="a key bk" style="left:925.5px;top:140.6px;height:18px"></div>
<div class="t kl" style="left:925.5px;top:145.6px;font-size:3.5px;color:#151515;font-weight:bold">OFFSET</div>
<div class="t kl" style="left:925.5px;top:150.2px;font-size:3.5px;color:#151515;font-weight:bold">SETTING</div>
<div class="a key" style="left:945.2px;top:140.6px;height:18px"></div>
<div class="t kl" style="left:945.2px;top:146.9px;font-size:5.4px;color:#66748e;font-weight:normal">SHIFT</div>
<div class="a key bk" style="left:965.0px;top:140.6px;height:18px"></div>
<div class="t kl" style="left:965.0px;top:147.5px;font-size:4.3px;color:#151515;font-weight:bold">CAN</div>
<div class="a key bk" style="left:984.8px;top:140.6px;height:18px"></div>
<div class="t kl" style="left:984.8px;top:147.5px;font-size:4.4px;color:#151515;font-weight:bold">INPUT</div>
<div class="a key bk" style="left:886.0px;top:160.2px;height:18px"></div>
<div class="t kl" style="left:886.0px;top:167.1px;font-size:4px;color:#151515;font-weight:bold">SYSTEM</div>
<div class="a key bk" style="left:905.8px;top:160.2px;height:18px"></div>
<div class="t kl" style="left:905.8px;top:167.1px;font-size:3.4px;color:#151515;font-weight:bold">MESSAGE</div>
<div class="a key bk" style="left:925.5px;top:160.2px;height:18px"></div>
<div class="t kl" style="left:925.5px;top:165.2px;font-size:3.4px;color:#151515;font-weight:bold">CUSTOM</div>
<div class="t kl" style="left:925.5px;top:169.8px;font-size:3.4px;color:#151515;font-weight:bold">GRAPH</div>
<div class="a key bk" style="left:945.2px;top:160.2px;height:18px"></div>
<div class="t kl" style="left:945.2px;top:167.1px;font-size:3.8px;color:#151515;font-weight:bold">ALTER</div>
<div class="a key bk" style="left:965.0px;top:160.2px;height:18px"></div>
<div class="t kl" style="left:965.0px;top:167.1px;font-size:4.3px;color:#151515;font-weight:bold">INSERT</div>
<div class="a key bk" style="left:984.8px;top:160.2px;height:18px"></div>
<div class="t kl" style="left:984.8px;top:167.1px;font-size:3.9px;color:#151515;font-weight:bold">DELETE</div>
<div class="a key bk" style="left:886px;top:180px;height:18px"></div>
<div class="a key bk" style="left:886px;top:199.600px;height:18px"></div>
<div class="t kl" style="left:886.0px;top:190.5px;font-size:4.2px;color:#222;font-weight:bold">PAGE</div>
<div class="t kl" style="left:886.0px;top:202.2px;font-size:4.2px;color:#222;font-weight:bold">PAGE</div>
<div class="a key" style="left:906px;top:189.7px;height:18px"></div>
<div class="a key" style="left:926px;top:180px;height:18px"></div>
<div class="a key" style="left:926px;top:199.6px;height:18px"></div>
<div class="a key" style="left:946px;top:189.7px;height:18px"></div>
<svg class="a" style="left:880px;top:175px" width="100" height="50" viewBox="880 175 100 50"><path d="M918.1 198.7L915.2 198.7" stroke="#1a1a1a" stroke-width="1.200"/><path d="M912.6 198.7L915.2 197.0L915.2 200.4z" fill="#1a1a1a"/><path d="M935.4 191.8L935.4 188.8" stroke="#1a1a1a" stroke-width="1.200"/><path d="M935.4 186.2L937.1 188.8L933.7 188.8z" fill="#1a1a1a"/><path d="M935.4 205.8L935.4 208.8" stroke="#1a1a1a" stroke-width="1.200"/><path d="M935.4 211.3L933.7 208.8L937.1 208.8z" fill="#1a1a1a"/><path d="M952.6 198.7L955.5 198.7" stroke="#1a1a1a" stroke-width="1.200"/><path d="M958.1 198.7L955.5 200.4L955.5 197.0z" fill="#1a1a1a"/><path d="M895.4 188.2L895.4 185.3" stroke="#1a1a1a" stroke-width="1.200"/><path d="M895.4 182.8L897.1 185.3L893.7 185.3z" fill="#1a1a1a"/><path d="M895.4 209.1L895.4 212.0" stroke="#1a1a1a" stroke-width="1.200"/><path d="M895.4 214.6L893.7 212.0L897.1 212.0z" fill="#1a1a1a"/></svg>
<div class="a key bk" style="left:985px;top:180px;height:18px"></div>
<div class="t kl" style="left:985.0px;top:187.2px;font-size:3.8px;color:#151515;font-weight:bold">HELP</div>
<div class="a key" style="left:985px;top:199.600px;height:18px"></div>
<div class="t kl" style="left:985.0px;top:206.7px;font-size:4.2px;color:#666;font-weight:normal">RESET</div>
<svg class="a" style="left:985px;top:199px" width="19" height="19" viewBox="0 0 19 19"><path d="M12.500 4.500l1.500-1.500 1.500 1.500M4 12l2 2.500 2-3" fill="none" stroke="#999" stroke-width="0.500"/></svg>
<div class="t" style="left:996px;top:221.500px;font-size:3.600px;font-weight:bold;color:#d03030">FANUC</div>
<div class="a" style="left:643px;top:272.500px;width:391px;height:157.500px;background:#404147"></div>
<svg class="a" style="left:643px;top:272px" width="381" height="158" viewBox="643 272 381 158"><defs><radialGradient id="led"><stop offset="0" stop-color="#c8c8c8"/><stop offset="0.3" stop-color="#8e8e8e"/><stop offset="0.5" stop-color="#c4c4c4"/><stop offset="0.8" stop-color="#b4b4b4"/><stop offset="1" stop-color="#6e6e6e"/></radialGradient><radialGradient id="ledy"><stop offset="0" stop-color="#f2f66a"/><stop offset="0.7" stop-color="#d2d83a"/><stop offset="1" stop-color="#8a8a3a"/></radialGradient><radialGradient id="ledd"><stop offset="0" stop-color="#cfcfc0"/><stop offset="0.3" stop-color="#9a9a7c"/><stop offset="0.52" stop-color="#c6ca8c"/><stop offset="0.8" stop-color="#a6ae4c"/><stop offset="1" stop-color="#6a6a44"/></radialGradient><radialGradient id="red" cx="0.45" cy="0.4"><stop offset="0" stop-color="#ee5a50"/><stop offset="0.45" stop-color="#e22228"/><stop offset="0.8" stop-color="#da1a22"/><stop offset="1" stop-color="#b01018"/></radialGradient><radialGradient id="yel" cx="0.5" cy="0.45"><stop offset="0.55" stop-color="#ece428"/><stop offset="0.85" stop-color="#e0d820"/><stop offset="1" stop-color="#bcb41c"/></radialGradient><radialGradient id="knob"><stop offset="0" stop-color="#5a5a5a"/><stop offset="1" stop-color="#2e2e2e"/></radialGradient></defs><rect x="652.8" y="292.5" width="15.700" height="15.500" fill="#c7c7c7"/><circle cx="660.8" cy="287.8" r="3.100" fill="url(#ledy)"/><rect x="652.8" y="321.1" width="15.700" height="15.500" fill="#c7c7c7"/><circle cx="660.8" cy="316.4" r="3.100" fill="url(#led)"/><rect x="652.8" y="349.8" width="15.700" height="15.500" fill="#c7c7c7"/><circle cx="660.8" cy="345.1" r="3.100" fill="url(#led)"/><rect x="652.8" y="378.4" width="15.700" height="15.500" fill="#c7c7c7"/><circle cx="660.8" cy="373.7" r="3.100" fill="url(#led)"/><rect x="652.8" y="407.1" width="15.700" height="15.500" fill="#c7c7c7"/><circle cx="660.8" cy="402.4" r="3.100" fill="url(#led)"/><rect x="673.8" y="292.5" width="15.700" height="15.500" fill="#c7c7c7"/><circle cx="681.8" cy="287.8" r="3.100" fill="url(#led)"/><rect x="673.8" y="321.1" width="15.700" height="15.500" fill="#c7c7c7"/><circle cx="681.8" cy="316.4" r="3.100" fill="url(#led)"/><rect x="673.8" y="349.8" width="15.700" height="15.500" fill="#c7c7c7"/><circle cx="681.8" cy="345.1" r="3.100" fill="url(#led)"/><rect x="673.8" y="378.4" width="15.700" height="15.500" fill="#c7c7c7"/><circle cx="681.8" cy="373.7" r="3.100" fill="url(#led)"/><rect x="673.8" y="407.1" width="15.700" height="15.500" fill="#c7c7c7"/><circle cx="681.8" cy="402.4" r="3.100" fill="url(#ledy)"/><rect x="694.5" y="292.5" width="15.700" height="15.500" fill="#c7c7c7"/><circle cx="702.5" cy="287.8" r="3.100" fill="url(#led)"/><rect x="694.5" y="321.1" width="15.700" height="15.500" fill="#c7c7c7"/><circle cx="702.5" cy="316.4" r="3.100" fill="url(#led)"/><rect x="694.5" y="349.8" width="15.700" height="15.500" fill="#c7c7c7"/><circle cx="702.5" cy="345.1" r="3.100" fill="url(#led)"/><rect x="694.5" y="378.4" width="15.700" height="15.500" fill="#c7c7c7"/><circle cx="702.5" cy="373.7" r="3.100" fill="url(#led)"/><rect x="694.5" y="407.1" width="15.700" height="15.500" fill="#c7c7c7"/><circle cx="702.5" cy="402.4" r="3.100" fill="url(#led)"/><rect x="714.7" y="292.5" width="15.700" height="15.500" fill="#c7c7c7"/><circle cx="722.7" cy="287.8" r="3.100" fill="url(#led)"/><rect x="714.7" y="321.1" width="15.700" height="15.500" fill="#c7c7c7"/><circle cx="722.7" cy="316.4" r="3.100" fill="url(#led)"/><rect x="714.7" y="349.8" width="15.700" height="15.500" fill="#c7c7c7"/><circle cx="722.7" cy="345.1" r="3.100" fill="url(#led)"/><rect x="714.7" y="378.4" width="15.700" height="15.500" fill="#c7c7c7"/><circle cx="722.7" cy="373.7" r="3.100" fill="url(#led)"/><rect x="714.7" y="407.1" width="15.700" height="15.500" fill="#c7c7c7"/><circle cx="722.7" cy="402.4" r="3.100" fill="url(#led)"/><rect x="747.8" y="292.5" width="15.700" height="15.500" fill="#c7c7c7"/><circle cx="755.8" cy="287.8" r="3.100" fill="url(#led)"/><rect x="747.8" y="321.1" width="15.700" height="15.500" fill="#c7c7c7"/><circle cx="755.8" cy="316.4" r="3.100" fill="url(#led)"/><rect x="747.8" y="349.8" width="15.700" height="15.500" fill="#c7c7c7"/><circle cx="755.8" cy="345.1" r="3.100" fill="url(#led)"/><rect x="747.8" y="378.4" width="15.700" height="15.500" fill="#c7c7c7"/><circle cx="755.8" cy="373.7" r="3.100" fill="url(#led)"/><rect x="747.8" y="407.1" width="15.700" height="15.500" fill="#c7c7c7"/><circle cx="755.8" cy="402.4" r="3.100" fill="url(#led)"/><rect x="768.9" y="292.5" width="15.700" height="15.500" fill="#c7c7c7"/><circle cx="776.9" cy="287.8" r="3.100" fill="url(#led)"/><rect x="768.9" y="321.1" width="15.700" height="15.500" fill="#c7c7c7"/><circle cx="776.9" cy="316.4" r="3.100" fill="url(#led)"/><rect x="768.9" y="349.8" width="15.700" height="15.500" fill="#c7c7c7"/><circle cx="776.9" cy="345.1" r="3.100" fill="url(#led)"/><rect x="768.9" y="378.4" width="15.700" height="15.500" fill="#c7c7c7"/><circle cx="776.9" cy="373.7" r="3.100" fill="url(#led)"/><rect x="768.9" y="407.1" width="15.700" height="15.500" fill="#c7c7c7"/><circle cx="776.9" cy="402.4" r="3.100" fill="url(#led)"/><rect x="789.7" y="292.5" width="15.700" height="15.500" fill="#c7c7c7"/><circle cx="797.7" cy="287.8" r="3.100" fill="url(#led)"/><rect x="789.7" y="321.1" width="15.700" height="15.500" fill="#c7c7c7"/><circle cx="797.7" cy="316.4" r="3.100" fill="url(#led)"/><rect x="789.7" y="349.8" width="15.700" height="15.500" fill="#c7c7c7"/><circle cx="797.7" cy="345.1" r="3.100" fill="url(#led)"/><rect x="789.7" y="378.4" width="15.700" height="15.500" fill="#c7c7c7"/><circle cx="797.7" cy="373.7" r="3.100" fill="url(#led)"/><rect x="789.7" y="407.1" width="15.700" height="15.500" fill="#c7c7c7"/><circle cx="797.7" cy="402.4" r="3.100" fill="url(#led)"/><rect x="810.2" y="292.5" width="15.700" height="15.500" fill="#c7c7c7"/><circle cx="818.2" cy="287.8" r="3.100" fill="url(#led)"/><rect x="810.2" y="321.1" width="15.700" height="15.500" fill="#c7c7c7"/><circle cx="818.2" cy="316.4" r="3.100" fill="url(#led)"/><rect x="810.2" y="349.8" width="15.700" height="15.500" fill="#c7c7c7"/><circle cx="818.2" cy="345.1" r="3.100" fill="url(#led)"/><rect x="810.2" y="378.4" width="15.700" height="15.500" fill="#c7c7c7"/><circle cx="818.2" cy="373.7" r="3.100" fill="url(#led)"/><rect x="810.2" y="407.1" width="15.700" height="15.500" fill="#c7c7c7"/><circle cx="818.2" cy="402.4" r="3.100" fill="url(#led)"/><rect x="843.8" y="292.5" width="15.700" height="15.500" fill="#c7c7c7"/><circle cx="851.8" cy="287.8" r="3.100" fill="url(#led)"/><rect x="843.8" y="321.1" width="15.700" height="15.500" fill="#c7c7c7"/><circle cx="851.8" cy="316.4" r="3.100" fill="url(#ledd)"/><rect x="843.8" y="349.8" width="15.700" height="15.500" fill="#c7c7c7"/><circle cx="851.8" cy="345.1" r="3.100" fill="url(#ledd)"/><rect x="843.8" y="378.4" width="15.700" height="15.500" fill="#c7c7c7"/><circle cx="851.8" cy="373.7" r="3.100" fill="url(#ledd)"/><rect x="843.8" y="407.1" width="15.700" height="15.500" fill="#c7c7c7"/><circle cx="851.8" cy="402.4" r="3.100" fill="url(#ledy)"/><rect x="863.7" y="292.5" width="15.700" height="15.500" fill="#c7c7c7"/><circle cx="871.7" cy="287.8" r="3.100" fill="url(#ledd)"/><rect x="863.7" y="321.1" width="15.700" height="15.500" fill="#c7c7c7"/><circle cx="871.7" cy="316.4" r="3.100" fill="url(#led)"/><rect x="863.7" y="349.8" width="15.700" height="15.500" fill="#c7c7c7"/><circle cx="871.7" cy="345.1" r="3.100" fill="url(#led)"/><rect x="863.7" y="378.4" width="15.700" height="15.500" fill="#c7c7c7"/><circle cx="871.7" cy="373.7" r="3.100" fill="url(#led)"/><rect x="863.7" y="407.1" width="15.700" height="15.500" fill="#c7c7c7"/><circle cx="871.7" cy="402.4" r="3.100" fill="url(#led)"/><rect x="883.8" y="292.5" width="15.700" height="15.500" fill="#c7c7c7"/><circle cx="891.8" cy="287.8" r="3.100" fill="url(#led)"/><rect x="883.8" y="321.1" width="15.700" height="15.500" fill="#c7c7c7"/><circle cx="891.8" cy="316.4" r="3.100" fill="url(#ledd)"/><rect x="883.8" y="349.8" width="15.700" height="15.500" fill="#c7c7c7"/><circle cx="891.8" cy="345.1" r="3.100" fill="url(#led)"/><rect x="883.8" y="378.4" width="15.700" height="15.500" fill="#c7c7c7"/><circle cx="891.8" cy="373.7" r="3.100" fill="url(#ledd)"/><rect x="883.8" y="407.1" width="15.700" height="15.500" fill="#c7c7c7"/><circle cx="891.8" cy="402.4" r="3.100" fill="url(#led)"/><rect x="654.3" y="295.5" width="13" height="9.500" fill="none" stroke="#555" stroke-width="0.700"/><rect x="656.8" y="298.8" width="7" height="3" fill="#111"/><path d="M664.3 297.0l2.600 3.300-2.600 3.300z" fill="#222"/><rect x="675.3" y="295.5" width="13" height="9.500" fill="none" stroke="#555" stroke-width="0.700"/><path d="M678.8 303.5l6-6.500M679.3 298.0h5v5h-5z" stroke="#888" stroke-width="0.700" fill="none"/><rect x="696.0" y="295.5" width="13" height="9.500" fill="none" stroke="#555" stroke-width="0.700"/><circle cx="701.5" cy="300.3" r="2.600" fill="#222"/><path d="M706.0 297.0l2.600 3.300-2.600 3.300z" fill="#222"/><rect x="716.2" y="295.5" width="13" height="9.500" fill="none" stroke="#555" stroke-width="0.700"/><path d="M721.7 297.0v6M719.7 300.5q2 3 4 0" stroke="#333" stroke-width="0.800" fill="none"/><path d="M726.2 297.0l2.600 3.300-2.600 3.300z" fill="#222"/><path d="M656.8 326.6h7M656.8 328.90000000000003h7M656.8 331.20000000000005h7" stroke="#111" stroke-width="1.300"/><path d="M663.8 325.6l2.800 3.300-2.800 3.300z" fill="#222"/><rect x="678.3" y="325.6" width="6.500" height="6.500" fill="none" stroke="#444" stroke-width="0.800"/><path d="M678.8 331.6l5.500-5.500" stroke="#555" stroke-width="0.700"/><path d="M685.3 325.6l2.600 3.300-2.600 3.300z" fill="#222"/><ellipse cx="701.5" cy="328.90000000000003" rx="3.200" ry="2.400" fill="none" stroke="#333" stroke-width="0.900"/><path d="M706.0 325.6l2.600 3.300-2.600 3.300z" fill="#222"/><rect x="716.2" y="324.1" width="13" height="9.500" fill="none" stroke="#555" stroke-width="0.700"/><path d="M717.2 326.6h4M717.2 328.6h4M717.2 330.6h4" stroke="#666" stroke-width="0.700"/><circle cx="725.2" cy="328.90000000000003" r="2.300" fill="none" stroke="#444" stroke-width="0.800"/><path d="M721.7 328.90000000000003h4" stroke="#444" stroke-width="0.700"/><path d="M655.8 354.8h8.500l2 2.800-2 2.800H655.8" fill="none" stroke="#444" stroke-width="0.800"/><rect x="656.3" y="356.3" width="5" height="2.600" fill="#111"/><path d="M676.8 354.3h7.500q3 0 3 3.300t-3 3.300H676.8" fill="none" stroke="#555" stroke-width="0.800"/><rect x="678.3" y="356.3" width="5.500" height="2.600" rx="1" fill="#111"/><rect x="696.0" y="352.8" width="13" height="9.500" fill="none" stroke="#555" stroke-width="0.700"/><path d="M697.5 355.8l1 4 1-4 1 4 1-4 1 4" stroke="#666" stroke-width="0.600" fill="none"/><path d="M706.0 354.3l2.600 3.300-2.600 3.300z" fill="#222"/><rect x="654.3" y="410.1" width="13" height="9.500" fill="none" stroke="#555" stroke-width="0.700"/><circle cx="660.8" cy="414.90000000000003" r="2.700" fill="none" stroke="#111" stroke-width="1.300"/><path d="M676.3 411.1v8.500h11v-8.500" fill="none" stroke="#555" stroke-width="0.700"/><rect x="680.8" y="412.1" width="2" height="6" fill="#111"/><circle cx="701.0" cy="414.90000000000003" r="2.500" fill="none" stroke="#111" stroke-width="1.400"/><path d="M706.0 411.6l2.600 3.300-2.600 3.300z" fill="#222"/><rect x="749.3" y="295.5" width="13" height="9.500" fill="none" stroke="#555" stroke-width="0.700"/><circle cx="755.8" cy="300.3" r="3.300" fill="#fff" stroke="#111" stroke-width="0.700"/><path d="M755.8 300.3v-3.300a3.300 3.300 0 0 1 3.300 3.300zM755.8 300.3v3.300a3.300 3.300 0 0 1-3.300-3.300z" fill="#111"/><rect x="770.4" y="295.5" width="13" height="9.500" fill="none" stroke="#555" stroke-width="0.700"/><path d="M771.9 298.5l1.200 4.500 1.200-4.500 1.200 4.500 1.200-4.500 1.200 4.500 1.200-4.500 1.200 4.500 1.200-4.500" stroke="#666" stroke-width="0.600" fill="none"/><rect x="791.2" y="295.5" width="13" height="9.500" fill="none" stroke="#555" stroke-width="0.700"/><path d="M792.7 298.5l1.200 4.500 1.200-4.500 1.200 4.500 1.200-4.500 1.200 4.500 1.200-4.500 1.200 4.500 1.200-4.500" stroke="#666" stroke-width="0.600" fill="none"/><path d="M792.7 297.2h10" stroke="#333" stroke-width="0.800"/><rect x="811.7" y="295.5" width="13" height="9.500" fill="none" stroke="#555" stroke-width="0.700"/><circle cx="819.2" cy="300.3" r="3" fill="none" stroke="#444" stroke-width="0.800"/><path d="M814.2 300.3h5M819.2 300.3l2-2M819.2 300.3l2 2" stroke="#444" stroke-width="0.700"/><path d="M846.3 417.6h11M848.3 416.1v3h3.500v-3zM854.8 416.1v3" stroke="#444" stroke-width="0.700" fill="none"/><path d="M854.8 410.1v5" stroke="#111" stroke-width="1.100"/><path d="M866.2 417.6h11M868.2 416.1v3h3.500v-3zM874.7 416.1v3" stroke="#444" stroke-width="0.700" fill="none"/><circle cx="874.2" cy="412.6" r="1.700" fill="none" stroke="#444" stroke-width="0.700"/><path d="M866.7 414.6h9" stroke="#444" stroke-width="0.600"/><path d="M886.3 417.6h11M888.3 416.1v3h3.500v-3zM894.8 416.1v3" stroke="#444" stroke-width="0.700" fill="none"/><path d="M894.8 410.1v5" stroke="#111" stroke-width="1.100"/><path d="M866.7 388.4v-4h2.500v4h2.500v-4h2.500v4h2.500v-4" stroke="#8a8a8a" stroke-width="0.700" fill="none"/><circle cx="944.700" cy="311.900" r="24.300" fill="url(#yel)"/><circle cx="945" cy="312.100" r="17.600" fill="url(#red)"/><circle cx="945" cy="312.100" r="13.500" fill="none" stroke="#a80c14" stroke-width="0.700" stroke-dasharray="9 2" opacity="0.700"/><circle cx="997" cy="294.800" r="1.400" fill="none" stroke="#ddd" stroke-width="0.600"/><path d="M998.400 294.800h3M1004.500 292.300l2.400 2.500-2.400 2.500-2.400-2.500z" stroke="#ddd" stroke-width="0.600" fill="none"/><path d="M994.300 301.500v6" stroke="#eee" stroke-width="1"/><circle cx="1006.300" cy="304.500" r="2.700" fill="none" stroke="#eee" stroke-width="0.700"/><rect x="991.400" y="313" width="21.200" height="18" fill="#5c5c5c"/><path d="M991.400 313h21.200M991.400 331h21.200" stroke="#cfcfcf" stroke-width="1.500"/><circle cx="1001.500" cy="322.100" r="5.600" fill="#d8d8d2" stroke="#4a4a4a" stroke-width="0.700"/><path d="M999.600 325.300l3.800-6.400" stroke="#1a1a1a" stroke-width="1.500" stroke-linecap="round"/><path d="M926.1 409.9A20.400 20.400 0 1 1 955.9 409.9" fill="none" stroke="#f4f4f4" stroke-width="1.100"/><path d="M927.1 410.9L925.5 412.7" stroke="#f0f0f0" stroke-width="0.700"/><text x="922.2" y="417.7" text-anchor="middle" font-family="Liberation Sans,sans-serif" font-weight="bold" font-size="4.500" fill="#ececec">0</text><path d="M924.0 407.3L922.0 408.6" stroke="#f0f0f0" stroke-width="0.700"/><text x="918.1" y="412.8" text-anchor="middle" font-family="Liberation Sans,sans-serif" font-weight="bold" font-size="4.500" fill="#ececec">1</text><path d="M921.8 403.0L919.6 403.8" stroke="#f0f0f0" stroke-width="0.700"/><text x="915.2" y="407.0" text-anchor="middle" font-family="Liberation Sans,sans-serif" font-weight="bold" font-size="4.500" fill="#ececec">2</text><path d="M920.7 398.3L918.3 398.6" stroke="#f0f0f0" stroke-width="0.700"/><text x="913.7" y="400.7" text-anchor="middle" font-family="Liberation Sans,sans-serif" font-weight="bold" font-size="4.500" fill="#ececec">4</text><path d="M920.8 393.5L918.4 393.2" stroke="#f0f0f0" stroke-width="0.700"/><text x="913.7" y="394.2" text-anchor="middle" font-family="Liberation Sans,sans-serif" font-weight="bold" font-size="4.500" fill="#ececec">6</text><path d="M921.9 388.9L919.6 388.0" stroke="#f0f0f0" stroke-width="0.700"/><text x="915.2" y="388.0" text-anchor="middle" font-family="Liberation Sans,sans-serif" font-weight="bold" font-size="4.500" fill="#ececec">8</text><path d="M924.1 384.6L922.1 383.3" stroke="#f0f0f0" stroke-width="0.700"/><text x="917.3" y="382.2" text-anchor="middle" font-family="Liberation Sans,sans-serif" font-weight="bold" font-size="4.500" fill="#ececec">10</text><path d="M927.2 381.0L925.6 379.2" stroke="#f0f0f0" stroke-width="0.700"/><text x="921.8" y="377.3" text-anchor="middle" font-family="Liberation Sans,sans-serif" font-weight="bold" font-size="4.500" fill="#ececec">15</text><path d="M931.1 378.2L929.9 376.1" stroke="#f0f0f0" stroke-width="0.700"/><text x="927.4" y="373.5" text-anchor="middle" font-family="Liberation Sans,sans-serif" font-weight="bold" font-size="4.500" fill="#ececec">20</text><path d="M935.5 376.3L934.9 374.0" stroke="#f0f0f0" stroke-width="0.700"/><text x="933.6" y="371.1" text-anchor="middle" font-family="Liberation Sans,sans-serif" font-weight="bold" font-size="4.500" fill="#ececec">30</text><path d="M940.3 375.6L940.2 373.2" stroke="#f0f0f0" stroke-width="0.700"/><text x="940.0" y="370.1" text-anchor="middle" font-family="Liberation Sans,sans-serif" font-weight="bold" font-size="4.500" fill="#ececec">40</text><path d="M945.1 376.0L945.5 373.7" stroke="#f0f0f0" stroke-width="0.700"/><text x="946.5" y="370.7" text-anchor="middle" font-family="Liberation Sans,sans-serif" font-weight="bold" font-size="4.500" fill="#ececec">50</text><path d="M949.6 377.5L950.6 375.3" stroke="#f0f0f0" stroke-width="0.700"/><text x="952.9" y="372.7" text-anchor="middle" font-family="Liberation Sans,sans-serif" font-weight="bold" font-size="4.500" fill="#ececec">60</text><path d="M953.7 380.0L955.2 378.2" stroke="#f0f0f0" stroke-width="0.700"/><text x="958.6" y="376.1" text-anchor="middle" font-family="Liberation Sans,sans-serif" font-weight="bold" font-size="4.500" fill="#ececec">70</text><path d="M957.1 383.4L959.0 382.0" stroke="#f0f0f0" stroke-width="0.700"/><text x="963.5" y="380.7" text-anchor="middle" font-family="Liberation Sans,sans-serif" font-weight="bold" font-size="4.500" fill="#ececec">80</text><path d="M959.6 387.5L961.7 386.5" stroke="#f0f0f0" stroke-width="0.700"/><text x="967.1" y="386.2" text-anchor="middle" font-family="Liberation Sans,sans-serif" font-weight="bold" font-size="4.500" fill="#ececec">90</text><path d="M961.0 392.1L963.4 391.6" stroke="#f0f0f0" stroke-width="0.700"/><text x="969.2" y="392.4" text-anchor="middle" font-family="Liberation Sans,sans-serif" font-weight="bold" font-size="4.500" fill="#ececec">95</text><path d="M961.4 396.9L963.8 397.0" stroke="#f0f0f0" stroke-width="0.700"/><text x="971.1" y="398.8" text-anchor="middle" font-family="Liberation Sans,sans-serif" font-weight="bold" font-size="4.500" fill="#ececec">100</text><path d="M960.6 401.6L962.9 402.3" stroke="#f0f0f0" stroke-width="0.700"/><text x="969.8" y="405.2" text-anchor="middle" font-family="Liberation Sans,sans-serif" font-weight="bold" font-size="4.500" fill="#ececec">105</text><path d="M958.8 406.0L960.8 407.2" stroke="#f0f0f0" stroke-width="0.700"/><text x="966.9" y="411.1" text-anchor="middle" font-family="Liberation Sans,sans-serif" font-weight="bold" font-size="4.500" fill="#ececec">110</text><path d="M955.9 409.9L957.7 411.5" stroke="#f0f0f0" stroke-width="0.700"/><text x="962.5" y="416.4" text-anchor="middle" font-family="Liberation Sans,sans-serif" font-weight="bold" font-size="4.500" fill="#ececec">120</text><circle cx="941" cy="396" r="14.600" fill="url(#knob)"/><rect x="928" y="391" width="30" height="10" rx="3" fill="#4a4a4a"/><path d="M959.5 396l-7-3v6z" fill="#fff"/><path d="M933.500 424.500h1.500l1.300-3 2 5.500 2-5.500 2 5.500 2-5.500 1.300 3" stroke="#f0f0f0" stroke-width="0.900" fill="none"/><text x="947.500" y="427" font-family="Liberation Sans,sans-serif" font-size="5" font-weight="bold" fill="#eee">%</text><circle cx="1013" cy="396" r="20.400" fill="none" stroke="#f0f0f0" stroke-width="0.800" stroke-dasharray="64 80" transform="rotate(120 1013 396)"/><path d="M1002.8 413.7L1001.6 415.7" stroke="#f0f0f0" stroke-width="0.700"/><text x="999.0" y="421.8" text-anchor="middle" font-family="Liberation Sans,sans-serif" font-weight="bold" font-size="4.500" fill="#ececec">50</text><path d="M995.3 406.2L993.3 407.4" stroke="#f0f0f0" stroke-width="0.700"/><text x="988.8" y="411.6" text-anchor="middle" font-family="Liberation Sans,sans-serif" font-weight="bold" font-size="4.500" fill="#ececec">60</text><path d="M992.6 396.0L990.2 396.0" stroke="#f0f0f0" stroke-width="0.700"/><text x="985.0" y="397.6" text-anchor="middle" font-family="Liberation Sans,sans-serif" font-weight="bold" font-size="4.500" fill="#ececec">70</text><path d="M995.3 385.8L993.3 384.6" stroke="#f0f0f0" stroke-width="0.700"/><text x="988.8" y="383.6" text-anchor="middle" font-family="Liberation Sans,sans-serif" font-weight="bold" font-size="4.500" fill="#ececec">80</text><path d="M1002.8 378.3L1001.6 376.3" stroke="#f0f0f0" stroke-width="0.700"/><text x="999.0" y="373.4" text-anchor="middle" font-family="Liberation Sans,sans-serif" font-weight="bold" font-size="4.500" fill="#ececec">90</text><path d="M1013.0 375.6L1013.0 373.2" stroke="#f0f0f0" stroke-width="0.700"/><text x="1013.0" y="369.6" text-anchor="middle" font-family="Liberation Sans,sans-serif" font-weight="bold" font-size="4.500" fill="#ececec">100</text><circle cx="1013" cy="396" r="14.600" fill="url(#knob)"/><rect x="1008" y="380" width="10" height="30" rx="3" fill="#4a4a4a"/><path d="M1013 377.5l-3 7h6z" fill="#fff"/><path d="M1005 425.500h5M1010 422.500v6h4v-6zM1014 425.500h3" stroke="#eee" stroke-width="0.800" fill="none"/><text x="1018" y="427.500" font-family="Liberation Sans,sans-serif" font-size="4" fill="#eee">%</text></svg>
<div class="t" style="left:843.8px;top:298.5px;width:16px;text-align:center;font-size:3.9px;font-weight:bold;color:#333;letter-spacing:0;">COOL</div>
<div class="t" style="left:863.7px;top:298.5px;width:16px;text-align:center;font-size:3.9px;font-weight:bold;color:#333;letter-spacing:0;">TOOL</div>
<div class="t" style="left:843.8px;top:325.3px;width:16px;text-align:center;font-size:8.6px;font-weight:bold;color:#111;letter-spacing:0;font-family:DejaVu Sans,Liberation Sans,sans-serif;">X</div>
<div class="t" style="left:883.8px;top:325.3px;width:16px;text-align:center;font-size:8.6px;font-weight:bold;color:#111;letter-spacing:0;font-family:DejaVu Sans,Liberation Sans,sans-serif;">Z</div>
<div class="t" style="left:843.8px;top:353.5px;width:16px;text-align:center;font-size:8.6px;font-weight:bold;color:#111;letter-spacing:0;font-family:DejaVu Sans,Liberation Sans,sans-serif;">4</div>
<div class="t" style="left:863.7px;top:353.5px;width:16px;text-align:center;font-size:8.6px;font-weight:bold;color:#111;letter-spacing:0;font-family:DejaVu Sans,Liberation Sans,sans-serif;">5</div>
<div class="t" style="left:883.8px;top:353.5px;width:16px;text-align:center;font-size:8.6px;font-weight:bold;color:#111;letter-spacing:0;font-family:DejaVu Sans,Liberation Sans,sans-serif;">6</div>
<div class="t" style="left:843.8px;top:380.3px;width:16px;text-align:center;font-size:10.5px;font-weight:bold;color:#111;letter-spacing:0;font-family:DejaVu Sans,Liberation Sans,sans-serif;">+</div>
<div class="t" style="left:883.8px;top:380.3px;width:16px;text-align:center;font-size:10.5px;font-weight:bold;color:#111;letter-spacing:0;font-family:DejaVu Sans,Liberation Sans,sans-serif;">&#8722;</div>
<div class="t" style="left:747.8px;top:326.8px;width:16px;text-align:center;font-size:4.3px;font-weight:bold;color:#333;letter-spacing:0;">X&nbsp;&nbsp;&nbsp;&nbsp;1</div>
<div class="t" style="left:768.9px;top:326.8px;width:16px;text-align:center;font-size:4.3px;font-weight:bold;color:#333;letter-spacing:0;">X&nbsp;&nbsp;10</div>
<div class="t" style="left:789.7px;top:326.8px;width:16px;text-align:center;font-size:4.3px;font-weight:bold;color:#333;letter-spacing:0;">X&nbsp;100</div>
<div class="t" style="left:810.2px;top:326.8px;width:16px;text-align:center;font-size:4.3px;font-weight:bold;color:#333;letter-spacing:0;">X1000</div>
<div class="a" id="status"></div>
<div class="a" style="left:630px;top:544.500px;width:108px;height:10.500px;border:1px solid #d2d2d2;border-right-color:#fff;border-bottom-color:#fff"></div>
<div class="a" style="left:740px;top:544.500px;width:110px;height:10.500px;border:1px solid #d2d2d2;border-right-color:#fff;border-bottom-color:#fff"></div>
<div class="a" style="left:852px;top:544.500px;width:13px;height:10.500px;border:1px solid #d2d2d2;border-right-color:#fff;border-bottom-color:#fff"></div>
<div class="t" style="left:632px;top:546.700px;font-size:6.550px;color:#444">相对:X -333.444, Z -500.519</div>
<div class="t" style="left:742.500px;top:546.700px;font-size:6.550px;color:#444">绝对:X&nbsp;&nbsp; 17.507, Z&nbsp;&nbsp; -3.342</div>
<div class="t" style="left:854px;top:546.700px;font-size:6.550px;color:#444">T:1</div>
<div class="a" style="left:867px;top:545.500px;width:14.500px;height:8.500px;background:#28d83a;border-radius:1px"></div>
<div class="a" style="left:868.500px;top:547px;width:8px;height:4.500px;background:#1c4a9a"></div><div class="a" style="left:878px;top:548.500px;width:2px;height:2px;background:#0a5a1a;border-radius:50%"></div>
<div class="a" style="left:882.500px;top:544.500px;width:139px;height:11px;background:#fff;border:1px solid #b4b4b4"></div>
<div class="t" style="left:884.500px;top:546.800px;font-size:6.400px;color:#9a9a9a">1.FANUC 0i-T标准面板</div>
<div class="t" style="left:1014.500px;top:548px;font-size:4.500px;color:#666">&#9662;</div>
<div class="a" id="taskbar"></div>
<div class="a" style="left:105.500px;top:554.500px;width:25.500px;height:21.500px;background:#edf8f8"></div>
<div class="a" style="left:81px;top:574.400px;width:20.500px;height:1.600px;background:#1c68a8"></div><div class="a" style="left:105.500px;top:574.400px;width:26px;height:1.600px;background:#1c68a8"></div>
<svg class="a" style="left:0;top:556px" width="1024" height="20" viewBox="0 556 1024 20"><path d="M8 562.300l3.700-.5v3.600H8zM12.300 561.700l4.700-.7v4.400h-4.700zM8 566h3.700v3.600l-3.700-.5zM12.300 566H17v4.400l-4.700-.7z" fill="#1a1a1a"/><circle cx="39" cy="564.300" r="3.700" fill="none" stroke="#1a1a1a" stroke-width="1.200"/><path d="M36.400 567.200l-3 3.300" stroke="#1a1a1a" stroke-width="1.400" stroke-linecap="round"/><rect x="60.500" y="559.500" width="10" height="11" fill="#e8eef2" stroke="#9aa8b4" stroke-width="0.700"/><rect x="60.500" y="559.500" width="10" height="2.300" fill="#a8b8c8"/><rect x="62.500" y="563.500" width="6" height="5" fill="#c8d0d8"/><defs><radialGradient id="glb" cx="0.4" cy="0.35"><stop offset="0" stop-color="#8ab8f0"/><stop offset="1" stop-color="#1a4ab0"/></radialGradient></defs><circle cx="91.500" cy="565" r="6.200" fill="url(#glb)"/><path d="M87 566c2-3.500 5.500-3.500 8-1.500s-1 4.500-3.500 3" fill="none" stroke="#e8f0ff" stroke-width="1"/><rect x="111.500" y="565" width="12.500" height="5.500" fill="#1f5ac0"/><rect x="114" y="560.500" width="5.500" height="5" fill="#6a92dc"/><rect x="120.500" y="559.500" width="1.500" height="4" fill="#e8b030"/><rect x="114" y="567" width="7.500" height="1.200" fill="#cfe0ff"/><path d="M852.500 567.500l3-3 3 3" fill="none" stroke="#222" stroke-width="0.900"/><path d="M866 570a9 9 0 0 1 7-7M868.500 570a6 6 0 0 1 4.500-4.500M871 570a3 3 0 0 1 2-2" fill="none" stroke="#444" stroke-width="0.900"/><circle cx="872.800" cy="569.500" r="0.800" fill="#444"/><path d="M877.500 565.500h1.800l2.200-2v7l-2.200-2h-1.800z" fill="#333"/><path d="M883 564.500q1.500 2.500 0 5" fill="none" stroke="#333" stroke-width="0.700"/><rect x="889" y="563" width="12" height="7" rx="1" fill="none" stroke="#333" stroke-width="0.800"/><path d="M891 565.200h8M891 567h8M893 568.800h4" stroke="#333" stroke-width="0.600" stroke-dasharray="1 0.800"/><rect x="1003.500" y="560" width="7.500" height="6.500" fill="#222"/><path d="M1005 566.500v2.500l2.500-2.500z" fill="#222"/><path d="M1005 562h4.500M1005 564h4.500" stroke="#eee" stroke-width="0.600"/><circle cx="1012" cy="568" r="3.300" fill="#f4f4f4" stroke="#222" stroke-width="0.700"/><text x="1012" y="569.700" text-anchor="middle" font-family="Liberation Sans,sans-serif" font-size="4.800" fill="#111">1</text></svg>
<div class="t" style="left:905.500px;top:561.300px;font-size:7.700px;color:#111;font-weight:bold">英</div>
<div class="a" style="left:922.500px;top:561.500px;width:8.500px;height:8.500px;border:0.700px solid #888"></div><div class="t" style="left:923.700px;top:562.700px;font-size:6.400px;color:#333">拼</div>
<div class="t" style="left:958.500px;top:558px;font-size:6.650px;color:#222">19:26</div>
<div class="t" style="left:939.500px;top:567.300px;font-size:6.650px;color:#222">2023/9/10 星期日</div>
</div></body></html>
